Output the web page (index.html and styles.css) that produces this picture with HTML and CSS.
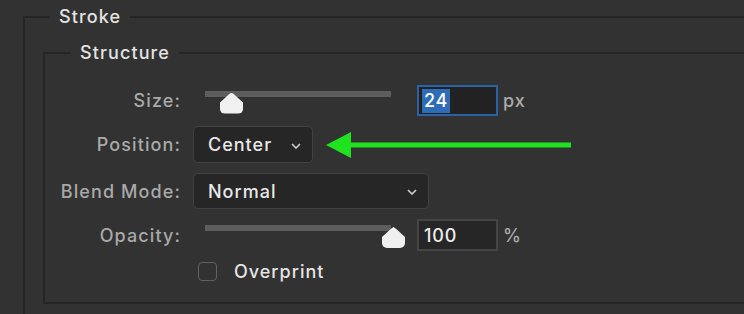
FILE: index.html
```html
<!DOCTYPE html>
<html lang="en">
<head>
    <meta charset="UTF-8">
    <title>Stroke</title>
    <link rel="stylesheet" href="styles.css">
</head>
<body>
<fieldset class="group">
    <legend>Stroke</legend>
    <fieldset class="group inner">
        <legend>Structure</legend>

        <div class="row">
            <label class="label">Size:</label>
            <div class="slider">
                <div class="track"></div>
                <div class="thumb" style="left: 15px;"></div>
            </div>
            <div class="field active"><span class="sel">24</span></div>
            <span class="unit">px</span>
        </div>

        <div class="row">
            <label class="label">Position:</label>
            <div class="select pos">
                <span>Center</span>
                <svg class="chev" width="10" height="6" viewBox="0 0 10 6"><path d="M1 1 L5 5 L9 1" fill="none" stroke="#cfcfcf" stroke-width="1.6"/></svg>
            </div>
            <!-- annotation arrow -->
            <svg class="arrow" width="246" height="26" viewBox="0 0 246 26">
                <polygon points="0,13 25,0 25,26" fill="#1fe31f"/>
                <rect x="24" y="10.5" width="221" height="5" fill="#1fe31f"/>
            </svg>
        </div>

        <div class="row">
            <label class="label">Blend Mode:</label>
            <div class="select blend">
                <span>Normal</span>
                <svg class="chev" width="10" height="6" viewBox="0 0 10 6"><path d="M1 1 L5 5 L9 1" fill="none" stroke="#cfcfcf" stroke-width="1.6"/></svg>
            </div>
        </div>

        <div class="row">
            <label class="label">Opacity:</label>
            <div class="slider">
                <div class="track"></div>
                <div class="thumb" style="left: 177px;"></div>
            </div>
            <div class="field"><span>100</span></div>
            <span class="unit">%</span>
        </div>

        <div class="row check-row">
            <span class="label"></span>
            <span class="checkbox"></span>
            <span class="check-text">Overprint</span>
        </div>
    </fieldset>
</fieldset>
</body>
</html>
```

FILE: styles.css
```css
body {
    margin: 0;
    background-color: #323232;
    font-family: Inter, "Liberation Sans", Arial, sans-serif;
    font-weight: 500;
    overflow: hidden;
    height: 314px;
}

/* Group frames */
.group {
    margin: 6px 0 0 23px;
    padding: 0 0 40px 0;
    width: 900px;
    border: 2px solid #252525;
    border-right: none;
}

.group legend {
    margin-left: 25px;
    padding: 0 9px;
    font-size: 18px;
    line-height: 22px;
    letter-spacing: 1.1px;
    color: #e2e2e2;
}

.group.inner {
    margin: 14px 0 0 18px;
    padding: 21px 0 21px 0;
}

.group.inner legend {
    margin-left: 26px;
}

/* Rows */
.row {
    display: flex;
    align-items: center;
    margin-bottom: 10px;
}

.row:last-child {
    margin-bottom: 0;
}

.label {
    width: 136px;
    text-align: right;
    font-size: 18px;
    letter-spacing: 1.1px;
    color: #a9a9a9;
}

/* Slider */
.slider {
    position: relative;
    width: 186px;
    height: 28px;
    margin-left: 24px;
}

.track {
    position: absolute;
    left: 0;
    right: 0;
    top: 4px;
    height: 6px;
    background-color: #5d5d5d;
}

.thumb {
    position: absolute;
    top: 6px;
    width: 23px;
    height: 21px;
    background-color: #f0f0f0;
    clip-path: polygon(50% 0, 62% 10%, 100% 48%, 100% 88%, 93% 100%, 7% 100%, 0 88%, 0 48%, 38% 10%);
    border-radius: 0 0 5px 5px;
}

/* Number fields */
.field {
    width: 81px;
    height: 32px;
    box-sizing: border-box;
    margin-left: 26px;
    padding: 0 5px;
    display: flex;
    align-items: center;
    background-color: #262626;
    border: 2px solid #454545;
    font-size: 18px;
    letter-spacing: 0.8px;
    color: #ececec;
}

.field.active {
    height: 31px;
    border-color: #2b62a6;
    background-color: #222;
    padding: 0 3px;
}

.sel {
    background-color: #2e6db5;
    color: #fff;
    padding: 1px 2px 1px 2px;
    line-height: 22px;
}

.unit {
    margin-left: 5px;
    font-size: 18px;
    letter-spacing: 1px;
    color: #ababab;
}

/* Dropdowns */
.select {
    height: 37px;
    box-sizing: border-box;
    margin-left: 12px;
    padding: 0 11px 0 14px;
    display: flex;
    align-items: center;
    justify-content: space-between;
    background-color: #262626;
    border: 1.5px solid #424242;
    border-radius: 5px;
    font-size: 18px;
    letter-spacing: 1px;
    color: #e8e8e8;
}

.select.pos {
    width: 120px;
}

.select.blend {
    width: 236px;
    height: 36px;
}

.chev {
    margin-top: 2px;
}

.arrow {
    margin-left: 13px;
    display: block;
}

/* Checkbox */
.check-row {
    height: 20px;
    margin-top: 2px;
}

.checkbox {
    width: 19px;
    height: 19px;
    box-sizing: border-box;
    margin-left: 17px;
    border: 1.5px solid #606060;
    border-radius: 4px;
}

.check-text {
    margin-left: 17px;
    font-size: 18px;
    letter-spacing: 1px;
    color: #e4e4e4;
}
```
